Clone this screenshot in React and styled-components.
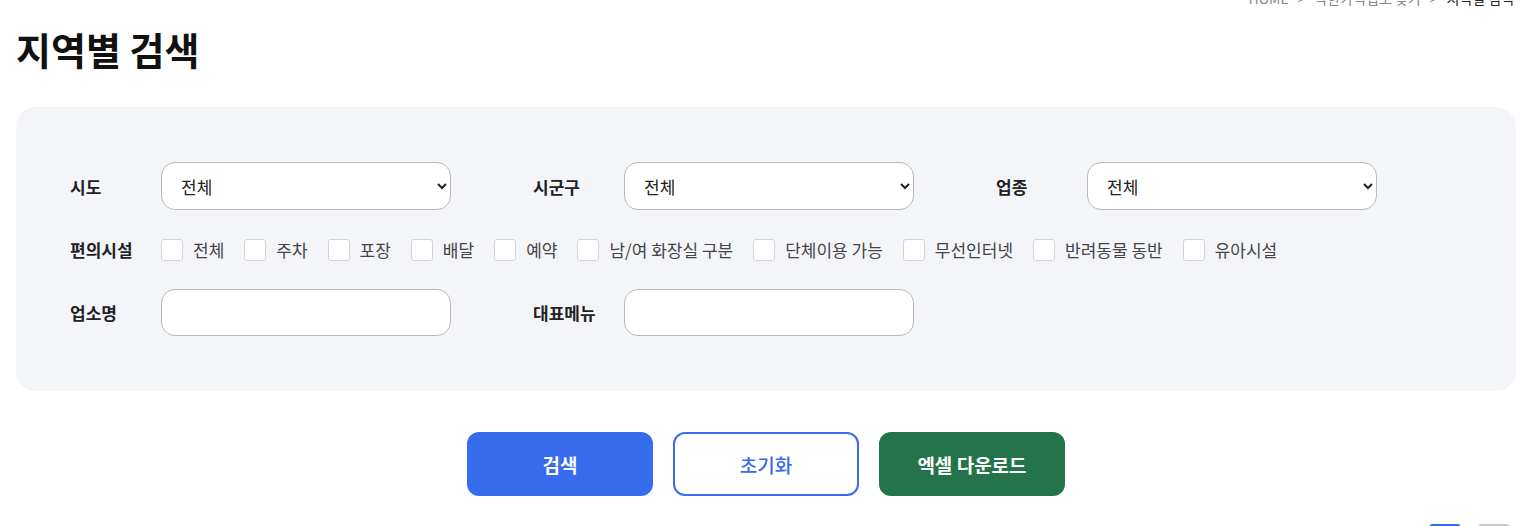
import styled, { createGlobalStyle } from "styled-components";

const GlobalStyle = createGlobalStyle`
  * { box-sizing: border-box; }
  body {
    margin: 0;
    background: #fff;
    font-family: "Noto Sans CJK KR", "Noto Sans", sans-serif;
    color: #222;
  }
`;

const Page = styled.div`
  padding: 0 16px;
  overflow: hidden;
`;

const Breadcrumb = styled.div`
  display: flex;
  justify-content: flex-end;
  gap: 9px;
  margin-top: -12px;
  padding-right: 2px;
  height: 20px;
  line-height: 20px;
  font-size: 14px;
  color: #888;
  span:last-child { color: #222; }
`;

const Title = styled.h2`
  margin: 17px 0 0;
  font-size: 38px;
  font-weight: 700;
  line-height: 48px;
  color: #111;
`;

const Panel = styled.div`
  margin-top: 34px;
  background: #f4f5f9;
  border-radius: 20px;
  padding: 55px 54px;
  display: flex;
  flex-direction: column;
  gap: 16px;
`;

const Row = styled.div`
  display: flex;
  align-items: center;
  min-height: 47px;
`;

const Group = styled.div`
  display: flex;
  align-items: center;
  width: 381px;
  margin-right: 82px;
`;

const Label = styled.label`
  width: 91px;
  flex-shrink: 0;
  font-size: 17px;
  font-weight: 700;
  color: #222;
`;

const Select = styled.select`
  width: 290px;
  height: 48px;
  padding: 0 8px 0 15px;
  border: 1px solid #b9b9bd;
  border-radius: 14px;
  background: #fff;
  font-family: inherit;
  font-size: 17px;
  color: #222;
`;

const Input = styled.input`
  width: 290px;
  height: 47px;
  padding: 0 18px;
  border: 1px solid #b9b9bd;
  border-radius: 14px;
  background: #fff;
  font-family: inherit;
  font-size: 17px;
`;

const Checks = styled.div`
  display: flex;
  align-items: center;
  gap: 20px;
`;

const Check = styled.label`
  display: flex;
  align-items: center;
  gap: 10px;
  font-size: 17px;
  color: #444;
  white-space: nowrap;
`;

const Box = styled.span`
  width: 22px;
  height: 22px;
  background: #fff;
  border: 1px solid #d4d4d8;
  border-radius: 3px;
`;

const Actions = styled.div`
  display: flex;
  justify-content: center;
  gap: 20px;
  margin-top: 41px;
`;

const Button = styled.button`
  width: 186px;
  height: 64px;
  border-radius: 12px;
  font-family: inherit;
  font-size: 19px;
  font-weight: ${(p) => (p.$variant === "outline" ? 500 : 700)};
  border: 2px solid ${(p) => (p.$variant === "excel" ? "#237448" : "#386cee")};
  background: ${(p) =>
    p.$variant === "outline" ? "#fff" : p.$variant === "excel" ? "#237448" : "#386cee"};
  color: ${(p) => (p.$variant === "outline" ? "#386cee" : "#fff")};
`;

const ViewBar = styled.div`
  display: flex;
  justify-content: flex-end;
  gap: 17px;
  margin-top: 28px;
  padding-right: 6px;
`;

const ViewButton = styled.span`
  width: 32px;
  height: 32px;
  border-radius: 4px;
  border: 2px solid ${(p) => (p.$active ? "#386cee" : "#c8c8cc")};
  background: #fff;
`;

const facilities = [
  "전체",
  "주차",
  "포장",
  "배달",
  "예약",
  "남/여 화장실 구분",
  "단체이용 가능",
  "무선인터넷",
  "반려동물 동반",
  "유아시설",
];

export default function App() {
  return (
    <>
      <GlobalStyle />
      <Page>
        <Breadcrumb>
          <span>HOME</span>
          <span>&gt;</span>
          <span>착한가격업소 찾기</span>
          <span>&gt;</span>
          <span>지역별 검색</span>
        </Breadcrumb>
        <Title>지역별 검색</Title>
        <Panel>
          <Row>
            <Group>
              <Label>시도</Label>
              <Select defaultValue="전체">
                <option>전체</option>
              </Select>
            </Group>
            <Group>
              <Label>시군구</Label>
              <Select defaultValue="전체">
                <option>전체</option>
              </Select>
            </Group>
            <Group>
              <Label>업종</Label>
              <Select defaultValue="전체">
                <option>전체</option>
              </Select>
            </Group>
          </Row>
          <Row>
            <Label>편의시설</Label>
            <Checks>
              {facilities.map((f) => (
                <Check key={f}>
                  <Box />
                  {f}
                </Check>
              ))}
            </Checks>
          </Row>
          <Row>
            <Group>
              <Label>업소명</Label>
              <Input />
            </Group>
            <Group>
              <Label>대표메뉴</Label>
              <Input />
            </Group>
          </Row>
        </Panel>
        <Actions>
          <Button>검색</Button>
          <Button $variant="outline">초기화</Button>
          <Button $variant="excel">엑셀 다운로드</Button>
        </Actions>
        <ViewBar>
          <ViewButton $active />
          <ViewButton />
        </ViewBar>
      </Page>
    </>
  );
}
